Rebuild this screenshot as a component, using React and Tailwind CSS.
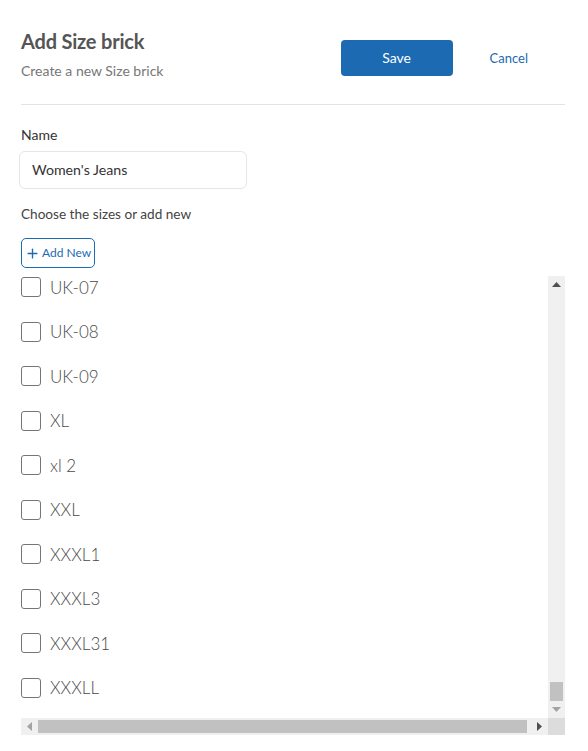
import { Plus } from 'lucide-react';

const sizes = ['UK-07', 'UK-08', 'UK-09', 'XL', 'xl 2', 'XXL', 'XXXL1', 'XXXL3', 'XXXL31', 'XXXLL'];

const SizeRow = ({ label }) => (
  <label className="flex items-center h-[44.5px] gap-[9px]">
    <span className="w-[20px] h-[20px] rounded-[3px] border border-[#757575] bg-white shrink-0" />
    <span className="text-[17px] font-light text-[#4a4a4a]">{label}</span>
  </label>
);

export default function App() {
  return (
    <div className="w-[588px] h-[751px] bg-white font-['Lato',sans-serif] pl-[21px] pr-[23px]">
      {/* Header */}
      <div className="flex items-start pt-[29px] h-[105px] border-b border-[#e3e3e3]">
        <div className="flex-1">
          <h1 className="text-[20px] font-bold text-[#555] leading-[24px] tracking-[-0.2px]">Add Size brick</h1>
          <p className="text-[14px] text-[#777] mt-[7px]">Create a new Size brick</p>
        </div>
        <button className="mt-[11px] w-[112px] h-[36px] rounded-[4px] bg-[#1c6ab2] text-white text-[14px] leading-[34px]">Save</button>
        <button className="mt-[12px] h-[36px] ml-[37px] mr-[37px] text-[13px] text-[#1c6ab2]">Cancel</button>
      </div>

      {/* Name */}
      <div className="pt-[21px]">
        <div className="text-[14px] text-[#333] leading-[17px]">Name</div>
        <div className="mt-[8px] ml-[-2px] w-[228px] h-[38px] rounded-[6px] border border-[#e6e6e6] flex items-center px-[12px] text-[14.2px] text-[#333]">
          Women's Jeans
        </div>
        <div className="mt-[17px] text-[13.6px] text-[#444] leading-[17px]">Choose the sizes or add new</div>
        <button className="mt-[15px] h-[30px] pl-[3px] pr-[3px] rounded-[5px] border border-[#1c6ab2] text-[#1c6ab2] text-[12px] flex items-center gap-[2px]">
          <Plus size={15} strokeWidth={2.2} />
          Add New
        </button>
      </div>

      {/* Scrollable list */}
      <div className="mt-[8px] flex flex-col h-[459px]">
        <div className="flex flex-1 min-h-0">
          <div className="flex-1 overflow-hidden">
            <div className="-mt-[11px]">
              {sizes.map((s) => (
                <SizeRow key={s} label={s} />
              ))}
            </div>
          </div>
          <div className="w-[17px] bg-[#f0f0f0] flex flex-col items-center">
            <svg width="9" height="5" viewBox="0 0 9 5" className="mt-[6px]">
              <polygon points="4.5,0 9,5 0,5" fill="#505050" />
            </svg>
            <div className="flex-1" />
            <div className="w-[13px] h-[19px] bg-[#c1c1c1]" />
            <svg width="9" height="5" viewBox="0 0 9 5" className="mt-[6px] mb-[6px]">
              <polygon points="0,0 9,0 4.5,5" fill="#a3a3a3" />
            </svg>
          </div>
        </div>
        <div className="flex h-[17px]">
          <div className="flex-1 bg-[#f0f0f0] flex items-center">
            <svg width="5" height="9" viewBox="0 0 5 9" className="ml-[6px]">
              <polygon points="5,0 5,9 0,4.5" fill="#a3a3a3" />
            </svg>
            <div className="ml-[6px] w-[489px] h-[13px] bg-[#c1c1c1]" />
            <div className="flex-1" />
            <svg width="5" height="9" viewBox="0 0 5 9" className="mr-[6px]">
              <polygon points="0,0 5,4.5 0,9" fill="#505050" />
            </svg>
          </div>
          <div className="w-[17px] bg-[#dcdcdc]" />
        </div>
      </div>
    </div>
  );
}
